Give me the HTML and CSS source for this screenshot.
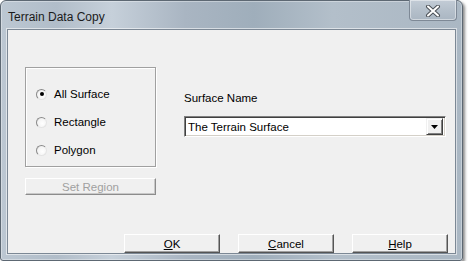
FILE: index.html
```html
<!DOCTYPE html>
<html>
<head>
<meta charset="utf-8">
<link rel="stylesheet" href="styles.css">
</head>
<body>
<div class="window">
  <div class="titlebar">
    <span class="title">Terrain Data Copy</span>
    <div class="close">
      <svg width="16" height="12" viewBox="0 0 16 12">
        <path d="M3 1.5 L13 10.5 M13 1.5 L3 10.5" stroke="#4a4f55" stroke-width="4" stroke-linecap="round" fill="none"/>
        <path d="M3 1.5 L13 10.5 M13 1.5 L3 10.5" stroke="#ffffff" stroke-width="2" stroke-linecap="round" fill="none"/>
      </svg>
    </div>
  </div>
  <div class="client">
    <div class="main">
      <div class="left">
        <div class="group">
          <div class="radio-row"><span class="radio checked"></span><span>All Surface</span></div>
          <div class="radio-row"><span class="radio"></span><span>Rectangle</span></div>
          <div class="radio-row"><span class="radio"></span><span>Polygon</span></div>
        </div>
        <div class="btn disabled setregion">Set Region</div>
      </div>
      <div class="right">
        <div class="label">Surface Name</div>
        <div class="combo">
          <span class="combo-text">The Terrain Surface</span>
          <span class="combo-btn">
            <svg width="7" height="4" viewBox="0 0 7 4"><path d="M0 0 H7 L3.5 4 Z" fill="#000"/></svg>
          </span>
        </div>
      </div>
    </div>
    <div class="buttons">
      <div class="btn"><u>O</u>K</div>
      <div class="btn"><u>C</u>ancel</div>
      <div class="btn"><u>H</u>elp</div>
    </div>
  </div>
</div>
</body>
</html>
```

FILE: styles.css
```css
html, body {
  margin: 0;
  padding: 0;
  background: #ffffff;
}
body {
  font-family: "Liberation Sans", Arial, sans-serif;
  font-size: 11.5px;
  color: #000;
}
.window {
  box-sizing: border-box;
  width: 463px;
  height: 261px;
  margin-left: 0;
  border: 1px solid #5d6873;
  border-radius: 6px 6px 3px 3px;
  background: linear-gradient(90deg, #bcc7d2 0%, #b1bdc9 12%, #c6d0da 24%, #a9b5c2 40%, #9faebb 55%, #b3bfca 72%, #aab7c3 100%);
  box-shadow: 2px 2px 3px rgba(0,0,0,0.45), inset 0 0 0 1px rgba(255,255,255,0.35);
  padding: 0 6px 6px 6px;
  display: flex;
  flex-direction: column;
}
.titlebar {
  height: 28px;
  display: flex;
  align-items: flex-start;
  flex: none;
}
.title {
  font-size: 12px;
  color: #1b1b1b;
  margin-top: 9px;
  margin-left: 1px;
  line-height: 14px;
}
.close {
  margin-left: auto;
  margin-top: -1px;
  margin-right: -1px;
  box-sizing: border-box;
  width: 48px;
  height: 21px;
  border: 1px solid #7e8996;
  border-top: none;
  border-radius: 0 0 4px 4px;
  background: linear-gradient(180deg, #c3ccd6 0%, #b5c0cb 50%, #aab6c2 100%);
  box-shadow: inset 0 0 0 1px rgba(255,255,255,0.45);
  display: flex;
  align-items: center;
  justify-content: center;
}
.close svg {
  margin-top: 1px;
}
.client {
  flex: 1;
  box-sizing: border-box;
  background: #f0f0f0;
  border: 1px solid #7c8895;
  box-shadow: 0 0 0 1px rgba(255,255,255,0.55);
  display: flex;
  flex-direction: column;
}
.main {
  display: flex;
}
.left {
  margin: 37px 0 0 17px;
  width: 131px;
}
.group {
  box-sizing: border-box;
  height: 100px;
  border: 1px solid #a0a0a0;
  box-shadow: inset 1px 1px 0 #ffffff, 1px 1px 0 #ffffff;
  padding: 12px 0 0 10px;
}
.radio-row {
  height: 28px;
  display: flex;
  align-items: center;
  gap: 7px;
}
.radio {
  box-sizing: border-box;
  width: 11px;
  height: 11px;
  border-radius: 50%;
  border: 1px solid;
  border-color: #8a8a8a #e4e4e4 #e4e4e4 #8a8a8a;
  background: radial-gradient(circle at 60% 60%, #ffffff 0%, #f4f4f4 60%, #d8d8d8 100%);
  display: flex;
  align-items: center;
  justify-content: center;
  flex: none;
}
.radio.checked::after {
  content: "";
  width: 4px;
  height: 4px;
  border-radius: 50%;
  background: #000;
}
.btn {
  box-sizing: border-box;
  width: 96px;
  height: 19px;
  border: 1px solid;
  border-color: #ffffff #555555 #555555 #ffffff;
  box-shadow: inset -1px -1px 0 #a0a0a0;
  background: #f0f0f0;
  display: flex;
  align-items: center;
  justify-content: center;
  line-height: 14px;
}
.btn u {
  text-decoration: underline;
  text-underline-offset: 1px;
}
.setregion {
  width: 131px;
  height: 17px;
  margin-top: 11px;
  border-color: #ffffff #8c8c8c #8c8c8c #ffffff;
  box-shadow: inset -1px -1px 0 #c8c8c8;
}
.disabled {
  color: #a0a0a0;
}
.right {
  margin: 61px 0 0 28px;
}
.label {
  line-height: 14px;
}
.combo {
  box-sizing: border-box;
  margin-top: 11px;
  width: 262px;
  height: 21px;
  background: #ffffff;
  border: 1px solid;
  border-color: #808080 #ffffff #ffffff #808080;
  box-shadow: inset 1px 1px 0 #404040, inset -1px -1px 0 #d4d0c8;
  display: flex;
  align-items: center;
  padding: 2px 2px 2px 3px;
}
.combo-text {
  flex: 1;
  line-height: 14px;
}
.combo-btn {
  box-sizing: border-box;
  width: 17px;
  height: 17px;
  background: #f0f0f0;
  border: 1px solid;
  border-color: #f0f0f0 #404040 #404040 #f0f0f0;
  box-shadow: inset 1px 1px 0 #ffffff, inset -1px -1px 0 #808080;
  display: flex;
  align-items: center;
  justify-content: center;
}
.buttons {
  margin-top: auto;
  display: flex;
  justify-content: flex-end;
  gap: 18px;
  padding: 0 7px 0 0;
}
```
